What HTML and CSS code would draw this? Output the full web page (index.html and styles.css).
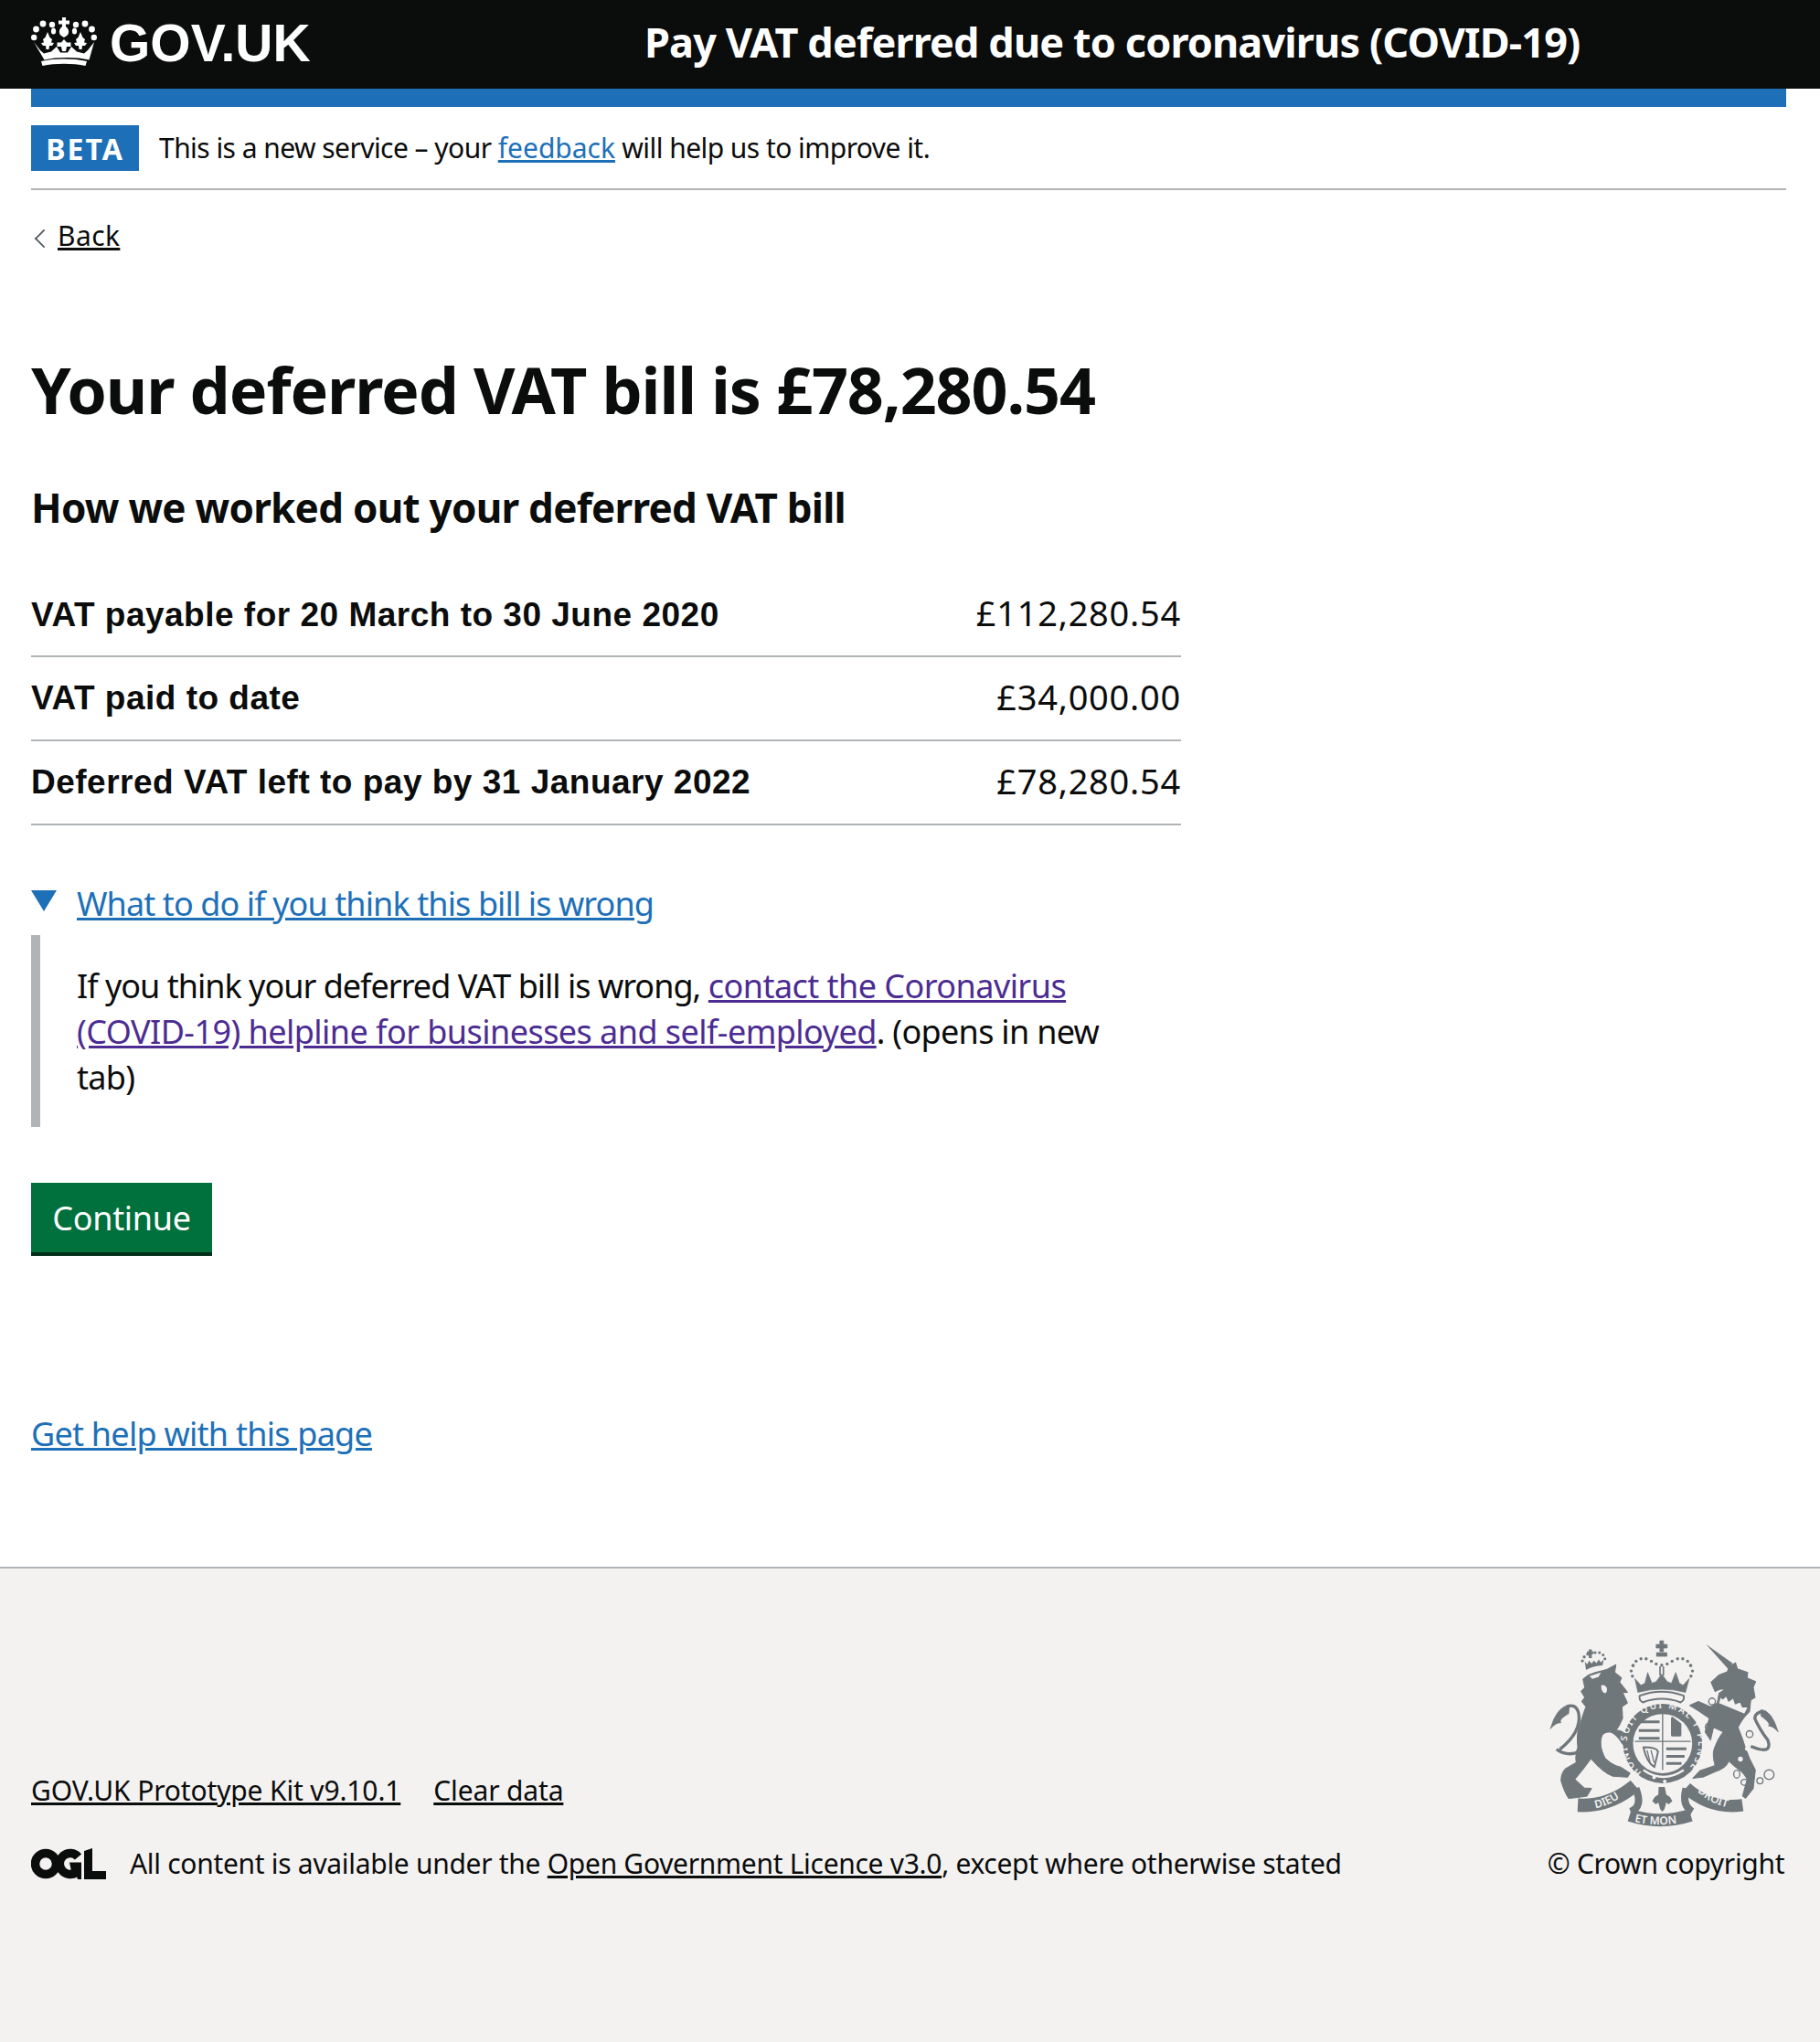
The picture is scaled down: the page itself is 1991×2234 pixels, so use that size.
FILE: index.html
```html
<!DOCTYPE html>
<html lang="en">
<head>
<meta charset="utf-8">
<title>Your deferred VAT bill</title>
<link rel="stylesheet" href="styles.css">
</head>
<body>
<header class="site-header">
  <a class="logo" href="#">
    <svg class="crown" viewBox="0 0 72 53" aria-hidden="true">
      <g fill="#fff">
        <path d="M34 0h4v3.500h4v4h-4v2.500c2.500 2 3.500 4.500 3 7-.5 2-2 3.500-5 5-3-1.500-4.500-3-5-5-.5-2.500.5-5 3-7V7.500h-4v-4h4z"/>
        <circle cx="23" cy="8" r="3.200"/><circle cx="49" cy="8" r="3.200"/>
        <circle cx="13" cy="7" r="3.400"/><circle cx="59" cy="7" r="3.400"/>
        <ellipse cx="24.500" cy="15" rx="2.600" ry="3.500"/><ellipse cx="47.500" cy="15" rx="2.600" ry="3.500"/>
        <circle cx="5.500" cy="13" r="3.400"/><circle cx="66.500" cy="13" r="3.400"/>
        <circle cx="3.200" cy="22" r="3.200"/><circle cx="68.800" cy="22" r="3.200"/>
        <path d="M18 16l2.500 6 2.500 2-1 3.500 3 .5-2 3h-3l-.5 4h-3l-.500-4H13l-2-3 3-.5-1-3.500 2.500-2z"/>
        <path d="M54 16l2.500 6 2.500 2-1 3.500 3 .5-2 3h-3l-.5 4h-3l-.500-4H49l-2-3 3-.5-1-3.500 2.500-2z"/>
        <path d="M36 24l3 3.500h4.500v4.500H39l-1 5h-4l-1-5h-4.500v-4.500H33z"/>
        <path d="M3 27l7 9 4 3.500 8-2 6-5.500 4 6.500h8l4-6.500 6 5.500 8 2 4-3.500 7-9-5.500 19.500c-7-1.700-15-2.500-24.500-2.500s-17.500.8-24.500 2.500z"/>
        <path d="M11 48c7.500-1.700 16-2.500 25-2.500s17.500.8 25 2.500l-1.500 5c-7-1.600-15-2.300-23.500-2.300S19.500 51.400 12.500 53z"/>
      </g>
    </svg>
    <span class="logo-text">GOV.UK</span>
  </a>
  <a class="service-name" href="#">Pay VAT deferred due to coronavirus (COVID-19)</a>
</header>

<div class="wrapper">
  <div class="blue-bar"></div>
  <div class="phase">
    <strong class="tag">BETA</strong>
    <span class="phase-text">This is a new service – your <a class="link phase-link" href="#">feedback</a> will help us to improve it.</span>
  </div>
  <a class="back" href="#">Back</a>

  <main class="main">
    <h1 class="title">Your deferred VAT bill is £78,280.54</h1>
    <h2 class="subtitle">How we worked out your deferred VAT bill</h2>
    <dl class="summary">
      <div class="row"><dt>VAT payable for 20 March to 30 June 2020</dt><dd>£112,280.54</dd></div>
      <div class="row"><dt>VAT paid to date</dt><dd>£34,000.00</dd></div>
      <div class="row"><dt>Deferred VAT left to pay by 31 January 2022</dt><dd>£78,280.54</dd></div>
    </dl>
    <div class="details">
      <div class="details-summary"><span class="triangle"></span><a class="link" href="#">What to do if you think this bill is wrong</a></div>
      <div class="details-text"><span class="lead">If you think your deferred VAT bill is wrong,</span> <a class="visited" href="#">contact the Coronavirus</a><br><a class="visited" href="#">(COVID-19) helpline for businesses and self-employed</a>. (opens in new<br>tab)</div>
    </div>
    <button class="button" type="button">Continue</button>
    <p class="help"><a class="link" href="#">Get help with this page</a></p>
  </main>
</div>

<footer class="footer">
  <div class="footer-meta">
    <div class="footer-left">
      <ul class="footer-links">
        <li><a href="#">GOV.UK Prototype Kit v9.10.1</a></li>
        <li><a href="#">Clear data</a></li>
      </ul>
      <div class="licence">
        <svg class="ogl" viewBox="0 0 82 34" aria-hidden="true">
          <g fill="none" stroke="#0b0c0c" stroke-width="9.500">
            <circle cx="16" cy="17" r="11.500"/>
            <path d="M51.500 9.500A11.500 11.500 0 1 0 50 26"/>
          </g>
          <path fill="#0b0c0c" d="M42 15.500h13V34h-4l-1-3-6-6zM58 3l9-3v25h15v9H58z"/>
        </svg>
        <span>All content is available under the <a href="#">Open Government Licence v3.0</a>, except where otherwise stated</span>
      </div>
    </div>
    <div class="footer-right">
      <svg class="crest" viewBox="100 40 770 620" aria-hidden="true">
        <g fill="#6f777b" stroke="#6f777b" stroke-linejoin="round">
          <!-- lion tail -->
          <path fill="none" stroke-width="10" d="M210 408Q175 428 135 402M146 402Q218 345 208 285Q200 250 168 262"/>
          <path stroke-width="2" d="M178 256Q135 262 115 335Q135 312 150 315Q140 305 175 285Z"/>
          <!-- lion -->
          <path stroke-width="3" d="M222 172L240 158L262 150L300 140L330 124L326 150L348 168L342 182L368 215L352 216L368 250L350 262L352 300Q342 325 330 340Q350 335 372 365L390 395L370 402L350 382Q330 350 310 345Q285 345 282 365Q275 395 295 432Q320 455 345 460L376 480L368 493L320 490Q290 480 248 432Q225 465 195 500L225 528L250 530L235 555L205 560L175 563Q160 540 150 505Q150 480 165 465L200 445Q195 420 205 395Q200 350 210 330Q220 290 232 262L218 245L228 232L216 212L228 200Z"/>
          <path fill="#f3f2f1" stroke="none" d="M243 162l38-12-8 14-20 7zM282 192q12-4 18 8 3 14-6 18-14-6-12-26z"/>
          <!-- lion crown -->
          <g stroke="none">
            <circle cx="220" cy="112" r="5"/><circle cx="226" cy="99" r="5"/><circle cx="237" cy="90" r="4.500"/><circle cx="262" cy="85" r="4.500"/><circle cx="276" cy="85" r="4.500"/><circle cx="288" cy="92" r="4.500"/><circle cx="294" cy="105" r="4.500"/>
            <path d="M241 74h10v7h6v8h-6v14h-10v-14h-6v-8h6z"/>
            <path d="M228 115l8 8 6-12 8 10 8-10 8 8 8-12 6 10 10-10-4 20Q255 128 232 142z"/>
          </g>
          <!-- unicorn tail -->
          <path fill="none" stroke-width="10" d="M772 392Q845 422 828 372Q800 335 785 300Q788 278 815 278"/>
          <path stroke-width="2" d="M805 272Q840 272 862 345Q845 325 830 325Q840 318 805 292Z"/>
          <!-- unicorn -->
          <path stroke-width="1" d="M628 60L712 120L698 138Z"/>
          <path stroke-width="3" d="M642 182L668 158L695 148L700 132L722 118L728 138L762 150L760 168L788 180L780 198L786 232L772 240L768 278Q745 300 730 330Q745 365 752 390L768 432L787 470L780 530L755 562L745 555L760 500Q750 480 735 470Q715 455 700 440Q690 465 655 475L618 492L582 497L605 472L655 455Q645 420 652 400Q665 365 682 345L650 330L640 372L622 345L636 300L600 275L572 258L600 245L640 262L662 250L668 218L688 205L672 205L655 212Z"/>
          <path fill="#f3f2f1" stroke="#6f777b" stroke-width="5" d="M672 228L680 236L692 225L700 243L715 232L722 252L738 245L745 262L765 262L752 288L665 252Z"/>
          <g fill="none" stroke-width="4">
            <circle cx="645" cy="245" r="11"/><circle cx="634" cy="328" r="11"/><circle cx="768" cy="352" r="11"/>
            <ellipse cx="726" cy="483" rx="10" ry="13"/><ellipse cx="752" cy="510" rx="12" ry="10"/><circle cx="802" cy="505" r="10"/><circle cx="832" cy="485" r="16"/>
          </g>
          <circle cx="738" cy="434" r="8" fill="#f3f2f1" stroke="none"/><circle cx="760" cy="400" r="7" fill="#f3f2f1" stroke="none"/>
          <!-- top crown -->
          <path stroke-width="2" d="M474 46h12v12h12v12h-12v12h-12v-12h-12v-12h12z"/>
          <rect x="462" y="84" width="36" height="14" stroke="none"/>
          <g stroke="none">
            <circle cx="386" cy="127" r="5.500"/><circle cx="380" cy="145" r="5"/><circle cx="384" cy="162" r="5"/><circle cx="396" cy="113" r="5"/><circle cx="412" cy="105" r="5"/><circle cx="429" cy="105" r="5"/><circle cx="446" cy="113" r="5"/><circle cx="462" cy="122" r="5"/><circle cx="480" cy="126" r="5"/><circle cx="498" cy="122" r="5"/><circle cx="514" cy="113" r="5"/><circle cx="532" cy="105" r="5"/><circle cx="549" cy="105" r="5"/><circle cx="565" cy="113" r="5"/><circle cx="575" cy="127" r="5.500"/><circle cx="581" cy="145" r="5"/><circle cx="576" cy="162" r="5"/>
          </g>
          <rect x="472" y="130" width="5" height="30" stroke="none"/><rect x="483" y="130" width="5" height="30" stroke="none"/>
          <path stroke-width="2" d="M392 170L412 192L425 185L434 150L448 185L462 180L480 155L498 180L512 185L526 150L538 185L550 192L570 170L558 215Q480 195 402 215Z"/>
          <path fill="#f3f2f1" stroke="#6f777b" stroke-width="6" d="M408 226Q480 200 552 226Q556 240 542 248Q480 225 418 248Q404 240 408 226Z"/>
          <!-- garter and shield -->
          <circle cx="483" cy="383" r="130" stroke="none"/>
          <circle cx="483" cy="383" r="97" fill="#f3f2f1" stroke="none"/>
          <g fill="none" stroke-width="9">
            <path d="M405 312h68M405 340h68M405 366h68"/>
            <path d="M495 400h66M495 425h60M495 448h50"/>
            <path d="M515 300l25 20v35h-25z" fill="#6f777b"/>
            <path d="M420 395q45 0 48 15l-12 50q-25-15-36-65z" stroke-width="6"/>
            <path d="M432 405l10 40M445 405l10 40" stroke-width="4"/>
          </g>
          <path stroke="#6f777b" stroke-width="4" fill="none" d="M483 280V470M392 376H575"/>
          <path stroke="#f3f2f1" stroke-width="7" fill="none" d="M420 470Q485 515 552 470"/>
          <circle cx="455" cy="494" r="6" fill="#f3f2f1" stroke="none"/><circle cx="490" cy="507" r="6" fill="#f3f2f1" stroke="none"/>
          <!-- motto -->
          <path fill="none" stroke-width="44" d="M205 585Q310 590 392 520"/>
          <path fill="none" stroke-width="40" d="M560 528Q640 600 745 585"/>
          <path fill="none" stroke-width="42" d="M375 618Q475 650 575 618"/>
          <path fill="none" stroke-width="24" d="M395 530Q420 590 378 606M560 530Q545 585 580 606"/>
          <path stroke="none" d="M470 525h20l5 25 12 8 8 14-12 10-8-6-6 22-7 8-7-8-6-22-8 6-12-10 8-14 12-8z"/>
        </g>
        <g class="crest-text" fill="#f3f2f1">
          <defs>
            <path id="garter" d="M414 478A117 117 0 1 1 552 478" fill="none"/>
            <path id="rib-l" d="M245 598Q320 590 378 530"/>
            <path id="rib-r" d="M585 528Q640 590 735 598"/>
            <path id="rib-c" d="M385 638Q475 660 575 635"/>
          </defs>
          <text font-size="30" textLength="560"><textPath href="#garter">HONI SOIT QUI MAL Y PENSE</textPath></text>
          <text font-size="36"><textPath href="#rib-l" startOffset="12%">DIEU</textPath></text>
          <text font-size="36"><textPath href="#rib-r" startOffset="10%">DROIT</textPath></text>
          <text font-size="36"><textPath href="#rib-c" startOffset="3%">ET MON</textPath></text>
        </g>
      </svg>
      <p class="copyright">© Crown copyright</p>
    </div>
  </div>
</footer>
</body>
</html>
```
FILE: styles.css
```css
* { box-sizing: border-box; }
html, body { margin: 0; padding: 0; }
body {
  font-family: "Noto Sans", "Liberation Sans", sans-serif;
  color: #0b0c0c;
  background: #fff;
}
a { color: inherit; }

.site-header {
  background: #0b0c0c;
  height: 97px;
  padding: 0 37px 0 34px;
  display: flex;
  align-items: center;
}
.logo {
  width: 671px;
  display: flex;
  align-items: center;
  gap: 14px;
  color: #fff;
  text-decoration: none;
}
.crown { width: 72px; height: 53px; display: block; margin-bottom: 6px; }
.logo-text {
  font-family: "Liberation Sans", sans-serif;
  font-weight: 700;
  font-size: 57px;
  line-height: 1;
  margin-bottom: 2px;
}
.service-name {
  color: #fff;
  text-decoration: none;
  font-weight: 700;
  font-size: 45px;
  line-height: 1;
  letter-spacing: -.88px;
  margin-bottom: 7px;
}

.wrapper { padding: 0 37px 0 34px; }
.blue-bar { height: 20px; background: #1d70b8; }
.phase {
  display: flex;
  align-items: center;
  padding: 20px 0 19px;
  border-bottom: 2px solid #b1b4b6;
}
.tag {
  background: #1d70b8;
  color: #fff;
  width: 118px;
  height: 50px;
  display: flex;
  align-items: center;
  justify-content: center;
  font-size: 32px;
  font-weight: 700;
  letter-spacing: 2px;
  margin-right: 22px;
}
.phase-text { font-size: 30px; letter-spacing: -.55px; line-height: 40px; }
.phase-link { letter-spacing: 0; }
.link { color: #1d70b8; }
.visited { color: #4c2c92; letter-spacing: -.55px; }
.lead { letter-spacing: -1px; }
.back {
  display: inline-block;
  position: relative;
  margin-top: 30px;
  margin-left: 29px;
  font-size: 30px;
  line-height: 40px;
  letter-spacing: .4px;
}
.back::before {
  content: "";
  position: absolute;
  left: -23px;
  top: 15px;
  width: 14px;
  height: 14px;
  border-left: 2px solid #505a5f;
  border-bottom: 2px solid #505a5f;
  transform: rotate(45deg) scale(.9);
}
.main { display: block; width: 1258px; }
.title {
  font-size: 70px;
  line-height: 80px;
  font-weight: 700;
  margin: 108px 0 0;
  letter-spacing: -1.1px;
}
.subtitle {
  font-size: 44px;
  line-height: 56px;
  font-weight: 700;
  margin: 61px 0 0;
  letter-spacing: -.75px;
}
.summary { margin: 45px 0 0; }
.row {
  display: flex;
  justify-content: space-between;
  align-items: center;
  height: 92px;
  border-bottom: 2px solid #b1b4b6;
}
.row:first-child { height: 91px; }
.row dt {
  font-family: "Liberation Sans", sans-serif;
  font-weight: 700;
  font-size: 37px;
  letter-spacing: .5px;
}
.row dd { margin: 0 0 5px; font-size: 38px; letter-spacing: .75px; }
.details { margin-top: 61px; }
.details-summary {
  display: flex;
  align-items: center;
  font-size: 36px;
  line-height: 50px;
  letter-spacing: -.9px;
}
.triangle {
  width: 0;
  height: 0;
  border-left: 14px solid transparent;
  border-right: 14px solid transparent;
  border-top: 23px solid #1d70b8;
  margin-right: 22px;
  position: relative;
  top: -4px;
}
.details-text {
  margin-top: 9px;
  border-left: 10px solid #b1b4b6;
  padding: 31px 60px 29px 40px;
  width: 1230px;
  font-size: 36px;
  line-height: 50px;
  letter-spacing: -.7px;
}
.button {
  display: block;
  margin-top: 61px;
  width: 198px;
  height: 80px;
  background: #00703c;
  color: #fff;
  border: 0;
  border-bottom: 4px solid #002d18;
  border-radius: 0;
  font-family: inherit;
  font-size: 36px;
  padding: 0;
  letter-spacing: -.3px;
}
.help {
  margin: 170px 0 0;
  font-size: 36px;
  line-height: 50px;
  letter-spacing: -.75px;
}

.footer {
  margin-top: 120px;
  background: #f3f2f1;
  border-top: 2px solid #b1b4b6;
  height: 520px;
  padding: 77px 37px 0 34px;
}
.footer-meta {
  display: flex;
  justify-content: space-between;
  align-items: flex-end;
}
.footer-links {
  display: flex;
  gap: 36px;
  list-style: none;
  margin: 0 0 40px;
  padding: 0;
  font-size: 30px;
  line-height: 40px;
  letter-spacing: -.15px;
}
.licence {
  display: flex;
  align-items: center;
  gap: 26px;
  font-size: 30px;
  line-height: 40px;
  letter-spacing: -.3px;
}
.ogl { width: 82px; height: 34px; display: block; }
.footer-right {
  display: flex;
  flex-direction: column;
  align-items: center;
}
.crest { width: 257px; height: 207px; display: block; margin-right: 6px; }
.crest-text { font-family: "Noto Sans", sans-serif; font-weight: 600; }
.copyright {
  margin: 19px 0 0;
  font-size: 30px;
  line-height: 40px;
  letter-spacing: -.3px;
}
```
